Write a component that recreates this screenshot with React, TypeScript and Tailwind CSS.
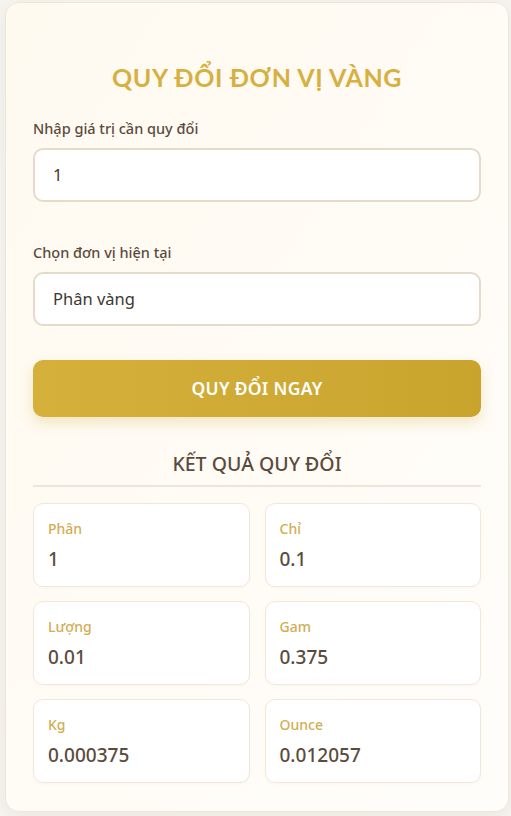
import React from 'react';

export default function App() {
  const results = [
    { label: 'Phân', value: '1' },
    { label: 'Chỉ', value: '0.1' },
    { label: 'Lượng', value: '0.01' },
    { label: 'Gam', value: '0.375' },
    { label: 'Kg', value: '0.000375' },
    { label: 'Ounce', value: '0.012057' },
  ];

  return (
    <div className="min-h-[816px] bg-[#f6f4f0] pl-[5px] pr-[2px] pt-[2px] pb-[4px] font-['Noto_Sans',sans-serif]">
      <div className="rounded-[14px] border border-[#efe6da] bg-gradient-to-br from-[#fffaf0] to-[#fffdfa] px-[27px] pt-[57px] pb-[28px] shadow-[0_4px_16px_rgba(120,90,40,0.08)]">
        <h1 className="text-center text-[25px] leading-[34px] font-bold tracking-[0.6px] text-[#d6b041] font-['Lato',sans-serif]">
          QUY ĐỔI ĐƠN VỊ VÀNG
        </h1>

        {/* Input value */}
        <div className="mt-[24px]">
          <label className="block text-[14.5px] leading-[20px] font-medium text-[#5b4b3d]">Nhập giá trị cần quy đổi</label>
          <div className="mt-[10px] flex h-[54px] items-center rounded-[10px] border-2 border-[#e6dacb] bg-white px-[18px] text-[16.5px] text-[#3f3630]">
            1
          </div>
        </div>

        {/* Unit */}
        <div className="mt-[40px]">
          <label className="block text-[14.5px] leading-[20px] font-medium text-[#5b4b3d]">Chọn đơn vị hiện tại</label>
          <div className="mt-[10px] flex h-[54px] items-center rounded-[10px] border-2 border-[#e6dacb] bg-white px-[18px] text-[16.5px] text-[#3f3630]">
            Phân vàng
          </div>
        </div>

        <button className="mt-[34px] flex h-[57px] w-full items-center justify-center rounded-[10px] bg-gradient-to-r from-[#d5b13c] to-[#c9a42d] text-[17.5px] font-semibold tracking-[0.3px] text-white shadow-[0_6px_14px_rgba(201,164,45,0.25)]">
          QUY ĐỔI NGAY
        </button>

        {/* Results */}
        <div className="mt-[34px] border-b-2 border-[#eee4d8] pb-[8px] text-center text-[19.5px] leading-[26px] font-medium text-[#5b4b3d]">
          KẾT QUẢ QUY ĐỔI
        </div>

        <div className="mt-[16px] grid grid-cols-2 gap-x-[15px] gap-y-[14px]">
          {results.map((r) => (
            <div key={r.label} className="h-[84px] rounded-[10px] border border-[#f1e7db] bg-white px-[14px] pt-[15px] shadow-[0_1px_3px_rgba(120,90,40,0.04)]">
              <div className="text-[14px] leading-[20px] font-medium text-[#d2ad52]">{r.label}</div>
              <div className="mt-[8px] text-[19px] leading-[24px] font-medium text-[#5b4b3d]">{r.value}</div>
            </div>
          ))}
        </div>
      </div>
    </div>
  );
}
